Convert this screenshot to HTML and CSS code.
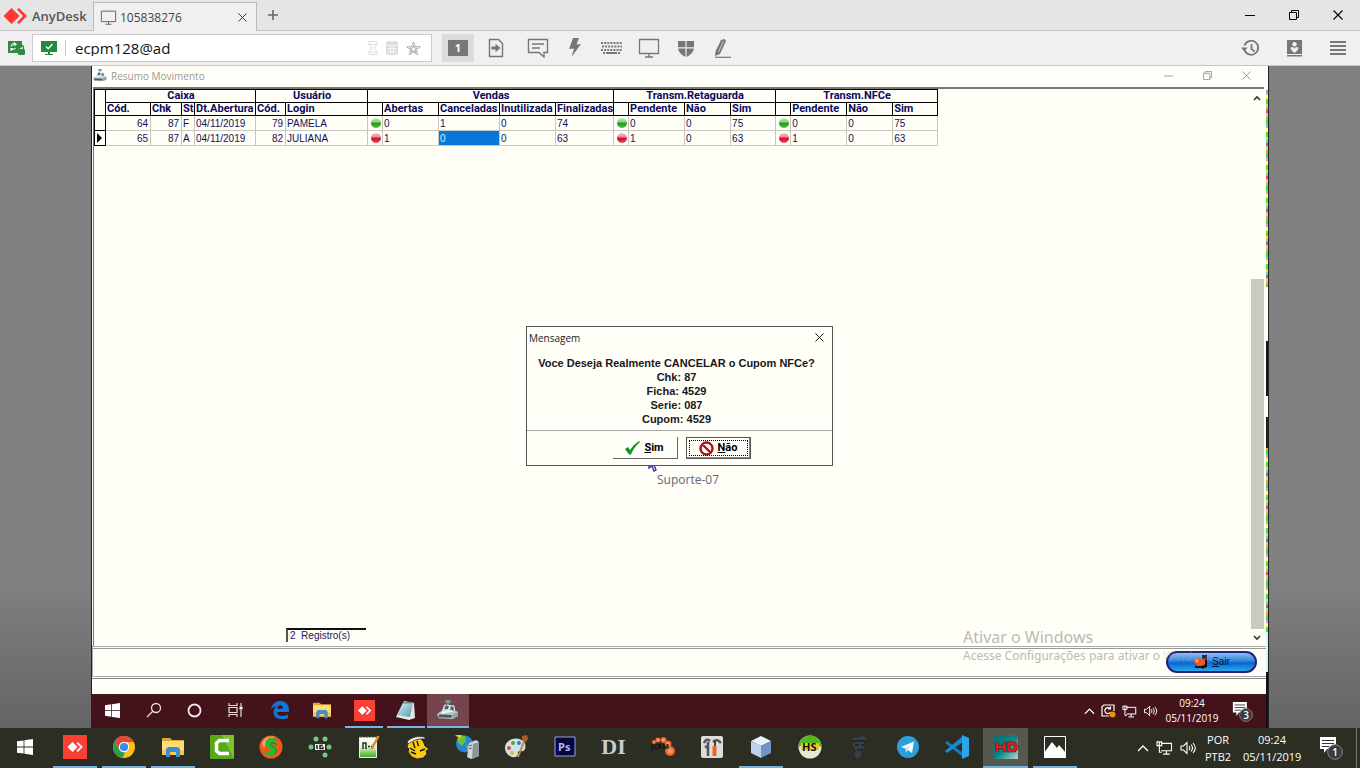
FILE: index.html
```html
<!DOCTYPE html>
<html lang="pt-BR">
<head>
<meta charset="utf-8">
<title>AnyDesk - 105838276</title>
<link rel="stylesheet" href="styles.css">
</head>
<body>
<svg class="defs" width="0" height="0" aria-hidden="true">
  <defs>
    <linearGradient id="gGreen" x1="0" y1="0" x2="0" y2="1"><stop offset="0" stop-color="#cfeec4"/><stop offset=".4" stop-color="#7fd070"/><stop offset=".55" stop-color="#259a22"/><stop offset="1" stop-color="#4cc03c"/></linearGradient>
    <linearGradient id="gRed" x1="0" y1="0" x2="0" y2="1"><stop offset="0" stop-color="#fbc8cf"/><stop offset=".4" stop-color="#ee7f8e"/><stop offset=".55" stop-color="#cc1030"/><stop offset="1" stop-color="#f04058"/></linearGradient>
    <linearGradient id="gTeal" x1="0" y1="0" x2="1" y2="1"><stop offset="0" stop-color="#06706c"/><stop offset=".5" stop-color="#0a8580"/><stop offset="1" stop-color="#b9d4d0"/></linearGradient>
    <linearGradient id="gNote" x1="0" y1="0" x2="0" y2="1"><stop offset="0" stop-color="#fff"/><stop offset=".45" stop-color="#e8f6d8"/><stop offset="1" stop-color="#38a818"/></linearGradient>
    <linearGradient id="gPad" x1="0" y1="0" x2="1" y2="1"><stop offset="0" stop-color="#d8f4f4"/><stop offset="1" stop-color="#4a9cae"/></linearGradient>
    <radialGradient id="gOrange"><stop offset="0" stop-color="#ffb080"/><stop offset="1" stop-color="#e8501c"/></radialGradient>
    <symbol id="windows" viewBox="0 0 16 16"><path fill="#fff" d="M0 2.3 6.6 1.4v6.2H0zM7.4 1.3 16 0v7.6H7.400zM0 8.400h6.600v6.200L0 13.700zM7.400 8.400H16V16l-8.600-1.200z"/></symbol>
    <symbol id="anydesk" viewBox="0 0 24 24"><path fill="#fa4035" d="M0 0h24v24H0z"/><path fill="#fff" d="m9.500 7 5 5-5 5-5-5zM13.500 8.300 14.800 7l5 5-5 5-1.300-1.300 3.700-3.700z"/></symbol>
    <symbol id="folder" viewBox="0 0 24 22"><path fill="#e0a52c" d="M1 2h8l2 2h12v4H1z"/><path fill="#ffdc78" d="M1 5h22v14H1z"/><path fill="#f4c550" d="M1 14h22v5H1z"/><path fill="#3a8fd0" d="M5 21v-8l2-2h10l2 2v8h-4v-5H9v5z"/></symbol>
    <symbol id="monitor" viewBox="0 0 22 20"><path fill="none" stroke="currentColor" stroke-width="1.300" d="M1.500 1.500h19v14h-19zM11 15.500V19M7 19h8"/></symbol>
    <symbol id="network" viewBox="0 0 18 15"><path fill="none" stroke="#fff" stroke-width="1.200" d="M5.500 2.500h11v8H5.500M11 10.500V14M7.500 14h7M1 1h5v4H1zM3.500 5v7H6M3.500 1v4"/></symbol>
    <symbol id="volume" viewBox="0 0 16 14"><path fill="none" stroke="#fff" stroke-width="1.100" d="M1 5h2.500L7 1.500v11L3.500 9H1zM9 5q1.500 2 0 4M11 3.500q3 3.500 0 7M13 2q4.500 5 0 10"/></symbol>
    <symbol id="chevron" viewBox="0 0 12 8"><path fill="none" stroke="currentColor" stroke-width="1.300" d="m1 7 5-5 5 5"/></symbol>
    <symbol id="arrow" viewBox="0 0 8 6"><path fill="none" stroke="currentColor" stroke-width="1.600" d="m1 5 3-3 3 3"/></symbol>
    <symbol id="cross" viewBox="0 0 10 10"><path fill="none" stroke="currentColor" stroke-width="1.100" d="m.5.5 9 9m0-9-9 9"/></symbol>
    <symbol id="restore" viewBox="0 0 10 10"><path fill="none" stroke="currentColor" d="M.5 2.500h7v7h-7zM2.500 2.500v-2h7v7h-2"/></symbol>
    <symbol id="dash" viewBox="0 0 10 10"><path stroke="currentColor" d="M0 5.500h10"/></symbol>
    <symbol id="notice" viewBox="0 0 24 24"><path fill="#fff" d="M1 1h16v12H8l-3 4v-4H1z"/><path stroke="#333" d="M3 4.500h12M3 7.500h12M3 10.500h7"/><circle cx="16" cy="16" r="7.300" fill="#3b3b3b" stroke="#888"/></symbol>
    <symbol id="register" viewBox="0 0 24 22"><path fill="#7f979a" d="M9 0h6v3h-2v3h-2V3H9z"/><path fill="#dce8e8" d="m8 5 11 1 1 6-16 3z"/><path fill="#42646a" d="m9 6 4 .5-1 3.500-4 .5zM15 7l3 .5.500 4-4 .5z"/><path fill="#b4c8ca" d="m3 13 14-2 6 2v5l-6 3-15-1-2-4z"/><path fill="#f3f8f8" d="m4 13 12-1.500 1 1.500-12 2z"/><path fill="#48585e" d="m2 16 14 .5v3L2 19z"/><path fill="#8ba2a6" d="m17 16 6-2.500V18l-6 3z"/></symbol>
    <symbol id="ballG" viewBox="0 0 10 10"><circle cx="5" cy="5" r="5" fill="url(#gGreen)"/></symbol>
    <symbol id="ballR" viewBox="0 0 10 10"><circle cx="5" cy="5" r="5" fill="url(#gRed)"/></symbol>
  </defs>
</svg>

<header class="tabs">
  <div class="brand">
    <svg width="24" height="18" viewBox="0 0 24 18"><path fill="#ff3b30" d="m8.500 1 8 8-8 8-8-8zM14 2.500 16 1l8 8-8 8-2-1.500L20 9z"/></svg>
    <span>AnyDesk</span>
  </div>
  <div class="tab">
    <svg class="tab-icon" width="17" height="15"><use href="#monitor"/></svg>
    <span class="tab-name">105838276</span>
    <button class="plain" aria-label="Fechar aba"><svg width="9" height="9"><use href="#cross"/></svg></button>
  </div>
  <button class="plain add" aria-label="Nova aba"><svg width="12" height="12" viewBox="0 0 12 12"><path stroke="#666" stroke-width="1.600" d="M6 1v10M1 6h10"/></svg></button>
  <div class="window-buttons">
    <button class="plain" aria-label="Minimizar"><svg width="10" height="10"><use href="#dash"/></svg></button>
    <button class="plain" aria-label="Restaurar"><svg width="10" height="10"><use href="#restore"/></svg></button>
    <button class="plain" aria-label="Fechar"><svg width="10" height="10"><use href="#cross"/></svg></button>
  </div>
</header>

<nav class="toolbar">
  <svg class="secure" width="17" height="16" viewBox="0 0 17 16"><path fill="#2e8b3d" d="M0 1h14v6.500a3.500 3.500 0 0 0-4 3.500v2H0z"/><path fill="none" stroke="#fff" stroke-width="1.200" d="M3 6.500a3 3 0 0 1 5-2M6 2.500l2 2-2.500 1M7.500 8a3 3 0 0 1-4.500.5M3 11V8.500h2"/><rect x="10" y="9" width="7" height="6" rx="1.500" fill="#2e8b3d"/><path fill="none" stroke="#2e8b3d" stroke-width="1.400" d="M11.500 9V7.500a2 2 0 0 1 4 0V9"/></svg>
  <div class="address">
    <svg width="16" height="14" viewBox="0 0 16 14"><path fill="#238b3b" d="M0 0h16v11H9v2h3v1H4v-1h3v-2H0z"/><path fill="none" stroke="#fff" stroke-width="1.300" d="m5 5.500 2.200 2.200L11.500 3"/></svg>
    <input type="text" value="ecpm128@ad" aria-label="Endereço remoto">
    <svg width="10" height="14" viewBox="0 0 10 14" fill="none" stroke="#ddd"><path d="M1 .5h8v3L6 7l3 3.500v3H1v-3L4 7 1 3.500zM1 3.500h8M1 11h8"/></svg>
    <svg width="12" height="14" viewBox="0 0 12 14"><rect width="12" height="14" rx="2" fill="#ddd"/><path stroke="#f4f4f4" d="M1 4.500h10M1 7.500h10M1 10.500h10M4.500 4v9M7.500 4v9"/></svg>
    <svg width="15" height="15" viewBox="0 0 15 15"><path fill="none" stroke="#aaa" d="m7.500 1 1.800 4.600 5 .3-3.900 3.100 1.400 4.900-4.300-2.800-4.300 2.800L4.600 9 .7 5.900l5-.3zM7.500 4.500l1 2.500 2.500.2-2 1.500.6 2.500-2.100-1.500-2.100 1.500.6-2.500-2-1.500 2.500-.2z"/></svg>
  </div>
  <div class="tools">
    <button class="plain screen-no" aria-label="Tela 1"><span>1</span></button>
    <button class="plain" aria-label="Transferir arquivos"><svg width="16" height="20" viewBox="0 0 16 20"><path fill="none" stroke="#777" stroke-width="1.400" d="M1.500 1.500h9l4 4v13h-13z"/><path fill="#777" d="M3.500 8.500h4V5.800l5 4.200-5 4.200v-2.700h-4z"/></svg></button>
    <button class="plain chat" aria-label="Chat"><svg width="22" height="20" viewBox="0 0 22 20"><path fill="none" stroke="#777" stroke-width="1.400" d="M1.500 1.500h19v13H17V19l-5-4.500H1.500zM5 6h12M5 10h8"/></svg></button>
    <button class="plain" aria-label="Ações"><svg width="14" height="20" viewBox="0 0 14 20"><path fill="#777" d="M5 0h6L8.500 6.500 13 6 3.500 19 6 10.500 1 11z"/></svg></button>
    <button class="plain" aria-label="Teclado"><svg width="21" height="12" viewBox="0 0 21 12"><path fill="none" stroke="#777" stroke-width="2" stroke-dasharray="2 1.100" d="M0 1h21M1 4.500h20M0 8h21"/><path stroke="#777" stroke-width="2" d="M2 11h2M5 11h11M17 11h2"/></svg></button>
    <button class="plain" aria-label="Exibição"><svg width="22" height="20" color="#777"><use href="#monitor"/></svg></button>
    <button class="plain" aria-label="Permissões"><svg width="16" height="17" viewBox="0 0 16 17"><path fill="#777" d="M0 1h7.400v6.300H0zM8.600 1H16v6.300H8.600zM0 8.500h7.400V17Q1 14 0 8.500zM8.600 8.500H16Q15 14 8.600 17z"/></svg></button>
    <button class="plain" aria-label="Desenhar"><svg width="17" height="19" viewBox="0 0 17 19"><path fill="#777" d="m7 1 3.500-1 1.500 2-6 13L1 17l.5-4.500z"/><path stroke="#f0f0f0" stroke-width=".7" d="M9.500 2 4.500 13"/><path stroke="#777" stroke-width="1.200" d="M1 18.300h16"/></svg></button>
  </div>
  <div class="session">
    <button class="plain" aria-label="Histórico"><svg width="19" height="17" viewBox="0 0 19 17"><path fill="none" stroke="#777" stroke-width="1.800" d="M3.500 10a7 7 0 1 0 0-4.500M10.500 4v5l3 2.500"/><path fill="#777" d="M0 7.500h6.500L3.200 11.500z"/></svg></button>
    <button class="plain" aria-label="Gravações"><svg width="15" height="17" viewBox="0 0 15 17"><path fill="#777" d="M0 0h15v14H0zM0 15h15v1.500H0z"/><circle cx="7.500" cy="4.300" r="2.200" fill="#f0f0f0"/><path fill="#f0f0f0" d="M3.500 8q2-2 4 .5 2-2.500 4-.5-.5 2.500-4 5-3.500-2.500-4-5z"/></svg></button>
    <button class="plain" aria-label="Menu"><svg width="16" height="14" viewBox="0 0 16 14"><path stroke="#777" stroke-width="1.800" d="M0 1h16M0 5h16M0 9h16M0 13h16"/></svg></button>
  </div>
</nav>

<main class="stage">
  <div class="remote">
    <section class="app">
      <div class="app-title">
        <svg width="14" height="13"><use href="#register"/></svg>
        <h1>Resumo Movimento</h1>
        <div class="app-buttons">
          <button class="plain" aria-label="Minimizar janela"><svg width="9" height="9"><use href="#dash"/></svg></button>
          <button class="plain" aria-label="Restaurar janela"><svg width="9" height="9"><use href="#restore"/></svg></button>
          <button class="plain" aria-label="Fechar janela"><svg width="9" height="9"><use href="#cross"/></svg></button>
        </div>
      </div>

      <div class="grid-area">
        <div class="grid-main">
          <table class="grid">
            <colgroup>
              <col class="c11"><col class="c45"><col class="c31"><col class="c13"><col class="c61"><col class="c30"><col class="c82">
              <col class="c15"><col class="c56"><col class="c61"><col class="c56"><col class="c58">
              <col class="c15"><col class="c56"><col class="c46"><col class="c45">
              <col class="c15"><col class="c56"><col class="c46"><col class="c45">
            </colgroup>
            <thead>
              <tr class="groups"><th rowspan="2"></th><th colspan="4">Caixa</th><th colspan="2">Usuário</th><th colspan="5">Vendas</th><th colspan="4">Transm.Retaguarda</th><th colspan="4">Transm.NFCe</th></tr>
              <tr class="names"><th>Cód.</th><th>Chk</th><th>St</th><th>Dt.Abertura</th><th>Cód.</th><th>Login</th><th></th><th>Abertas</th><th>Canceladas</th><th>Inutilizada</th><th>Finalizadas</th><th></th><th>Pendente</th><th>Não</th><th>Sim</th><th></th><th>Pendente</th><th>Não</th><th>Sim</th></tr>
            </thead>
            <tbody>
              <tr><td class="mark"></td><td class="num">64</td><td class="num">87</td><td>F</td><td>04/11/2019</td><td class="num">79</td><td>PAMELA</td><td class="ball"><svg width="10" height="10"><use href="#ballG"/></svg></td><td>0</td><td>1</td><td>0</td><td>74</td><td class="ball"><svg width="10" height="10"><use href="#ballG"/></svg></td><td>0</td><td>0</td><td>75</td><td class="ball"><svg width="10" height="10"><use href="#ballG"/></svg></td><td>0</td><td>0</td><td>75</td></tr>
              <tr><td class="mark"><svg width="6" height="10" viewBox="0 0 6 10"><path d="m0 0 5 5-5 5z"/></svg></td><td class="num">65</td><td class="num">87</td><td>A</td><td>04/11/2019</td><td class="num">82</td><td>JULIANA</td><td class="ball"><svg width="10" height="10"><use href="#ballR"/></svg></td><td>1</td><td class="selected">0</td><td>0</td><td>63</td><td class="ball"><svg width="10" height="10"><use href="#ballR"/></svg></td><td>1</td><td>0</td><td>63</td><td class="ball"><svg width="10" height="10"><use href="#ballR"/></svg></td><td>1</td><td>0</td><td>63</td></tr>
            </tbody>
          </table>
          <div class="count">2&nbsp; Registro(s)</div>
        </div>
        <div class="scroll">
          <button class="plain" aria-label="Rolar para cima"><svg width="8" height="6"><use href="#arrow"/></svg></button>
          <div class="thumb"></div>
          <button class="plain down" aria-label="Rolar para baixo"><svg width="8" height="6"><use href="#arrow"/></svg></button>
        </div>
      </div>

      <div class="actions">
        <button class="exit"><svg width="15" height="14" viewBox="0 0 15 14"><path fill="#101018" d="M9 0h5v12l-5 2zM2 11h8v2H2z"/><path fill="#f0552c" d="M0 6 6 2v2.500h4l1-2 1 2v5l-2 1H6V12z"/><path fill="#ffb070" d="m2 6 3-2v4z"/></svg><span><u>S</u>air</span></button>
      </div>
      <div class="status"></div>

      <div class="watermark"><p class="wm-title">Ativar o Windows</p><p>Acesse Configurações para ativar o <span>Windows.</span></p></div>
      <div class="pointer">
        <svg width="12" height="12" viewBox="0 0 12 12"><path fill="#fff" stroke="#35309c" stroke-width="1.400" d="M1 0v7l3-2 2 5 2-1-2-5h4"/></svg>
        <span>Suporte-07</span>
      </div>

      <div class="dialog" role="dialog" aria-labelledby="dlg">
        <div class="dialog-title"><h2 id="dlg">Mensagem</h2><button class="plain" aria-label="Fechar mensagem"><svg width="9" height="9"><use href="#cross"/></svg></button></div>
        <p class="message">Voce Deseja Realmente CANCELAR o Cupom NFCe?<br>Chk: 87<br>Ficha: 4529<br>Serie: 087<br>Cupom: 4529</p>
        <div class="choices">
          <button class="choice"><svg width="15" height="14" viewBox="0 0 15 14"><path fill="#13942a" d="m0 8 3-2 2 3Q9 3 14 0l1 1Q9 6 6 13.500H4Z"/></svg><span><u>S</u>im</span></button>
          <button class="choice focused"><svg width="15" height="15" viewBox="0 0 15 15"><path fill="none" stroke="#b01018" stroke-width="2.400" d="M7.500 1.500a6 6 0 1 0 0 12 6 6 0 0 0 0-12zM3.500 3.500l8 8"/></svg><span><u>N</u>ão</span></button>
        </div>
      </div>
    </section>

    <div class="remote-bar">
      <button class="plain item" aria-label="Iniciar"><svg width="15" height="15"><use href="#windows"/></svg></button>
      <button class="plain item" aria-label="Pesquisar"><svg width="16" height="16" viewBox="0 0 16 16"><path fill="none" stroke="#e8dcdc" stroke-width="1.300" d="M10 1.500a4.500 4.500 0 1 0 0 9 4.500 4.500 0 0 0 0-9zM6.500 9.500 1 15"/></svg></button>
      <button class="plain item" aria-label="Cortana"><svg width="15" height="15" viewBox="0 0 15 15"><circle cx="7.500" cy="7.500" r="6" fill="none" stroke="#f0e8e8" stroke-width="1.800"/></svg></button>
      <button class="plain item" aria-label="Visão de tarefas"><svg width="15" height="14" viewBox="0 0 15 14"><path fill="none" stroke="#e8dcdc" stroke-width="1.200" d="M1 0v2.500h8V0M1 14v-2.500h8V14M1 4.500h8v5H1zM13 0v3M13 7v7"/><path fill="#fff" d="M11.500 3.500h3v3h-3z"/></svg></button>
      <button class="plain item first-app" aria-label="Edge"><svg width="18" height="18" viewBox="0 0 18 18"><path fill="#0c78dc" d="M0 8.500C1 3 4.500 0 9.300 0 14.500 0 18 3.500 18 9v2H6c.2 3 2.500 4 5 4 2 0 4-.5 6-1.500V17c-2 1-4 1-6 1-5 0-8.500-2.500-8.500-7C2.500 8 4 6 6.500 4.800 3.500 5 1.500 6.500 0 8.500zM6.200 7.800h5.800C12 5.500 11 4.300 9.200 4.300 7.500 4.300 6.500 5.500 6.200 7.800z"/></svg></button>
      <button class="plain item" aria-label="Explorador"><svg width="20" height="18"><use href="#folder"/></svg></button>
      <button class="plain item running" aria-label="AnyDesk"><svg width="21" height="21"><use href="#anydesk"/></svg></button>
      <button class="plain item running" aria-label="Bloco de notas"><svg width="20" height="19" viewBox="0 0 20 19"><path fill="#e6e6e6" d="m8 0 10 2 1 15-6 2-13-3z"/><path fill="url(#gPad)" d="M7 2h10l-3 14-13-2z"/><path fill="#7a8890" d="M7 1h10v1.500H7z"/></svg></button>
      <button class="plain item running active" aria-label="Resumo"><svg width="22" height="20"><use href="#register"/></svg></button>
      <div class="remote-tray">
        <svg width="11" height="8" color="#fff"><use href="#chevron"/></svg>
        <svg width="15" height="14" viewBox="0 0 15 14"><path fill="none" stroke="#fff" stroke-width="1.200" d="M13 7V1H3L1 2.500V12h7"/><path fill="none" stroke="#fff" stroke-width="1.200" d="M9 4.500A3 3 0 1 0 9.500 8M9.500 2.500v2.500H7"/><circle cx="11.500" cy="10.500" r="3" fill="#f09010"/></svg>
        <svg width="15" height="13"><use href="#network"/></svg>
        <svg width="15" height="12"><use href="#volume"/></svg>
        <div class="clock">09:24<br>05/11/2019</div>
        <div class="notice"><svg width="21" height="21"><use href="#notice"/></svg><span>3</span></div>
      </div>
    </div>
  </div>
  <div class="noise"></div>
</main>

<footer class="taskbar">
  <button class="plain task start" aria-label="Iniciar"><svg width="16" height="16"><use href="#windows"/></svg></button>
  <button class="plain task on" aria-label="AnyDesk"><svg width="24" height="24"><use href="#anydesk"/></svg></button>
  <button class="plain task on" aria-label="Chrome"><svg width="24" height="24" viewBox="0 0 24 24"><circle cx="12" cy="12" r="11" fill="#fbc116"/><path fill="#df4738" d="M2.500 6.500A11 11 0 0 1 21.700 7H12a5 5 0 0 0-4.500 7z"/><path fill="#26a050" d="M2.500 6.500 7.700 14.700A5 5 0 0 0 13 17l-2.500 5.900A11 11 0 0 1 2.500 6.500z"/><circle cx="12" cy="12" r="5.200" fill="#fff"/><circle cx="12" cy="12" r="4.100" fill="#4285f4"/></svg></button>
  <button class="plain task on" aria-label="Explorador"><svg width="24" height="22"><use href="#folder"/></svg></button>
  <button class="plain task" aria-label="Camtasia"><svg width="24" height="24" viewBox="0 0 24 24"><rect width="24" height="24" rx="1" fill="#5aa818"/><path fill="#79c32c" d="M12 0h12v24z"/><path fill="none" stroke="#fff" stroke-width="3.500" d="M19 5.500H9.500L6.500 8v8l3 2.500H19"/></svg></button>
  <button class="plain task" aria-label="S"><svg width="24" height="24" viewBox="0 0 24 24"><circle cx="12" cy="12" r="11.500" fill="#f0581c"/><path fill="#ffa070" d="M3 8q4-8 13-6Q7 4 5 14z"/><path fill="none" stroke="#25b830" stroke-width="5" d="M16.500 7q-5-3.500-7.500 0-1 3 3 4.500t3 5q-3 3.500-7.500 1"/><path fill="none" stroke="#11701c" stroke-width=".8" d="M18 9.500q-5-3-6.500 0 0 1.500 3.500 3 4 3 1 6"/></svg></button>
  <button class="plain task" aria-label="IG"><svg width="24" height="24" viewBox="0 0 24 24"><g fill="#72c888"><circle cx="8" cy="4" r="2.500"/><circle cx="17" cy="4" r="2.500"/><circle cx="3" cy="12" r="2.500"/><circle cx="21" cy="12" r="2.500"/><circle cx="17" cy="20" r="2.500"/></g><path fill="#eee" d="M7 9h10v6H7z"/><path fill="none" stroke="#222" stroke-width="1.500" d="M9 10v4M15 10.500h-3v3h3V12"/></svg></button>
  <button class="plain task" aria-label="Notepad++"><svg width="22" height="24" viewBox="0 0 22 24"><path fill="url(#gNote)" stroke="#eee" d="M1.500 2.500h17v20h-17z"/><path stroke="#555" stroke-dasharray="2 1" d="M2 2h17"/><path fill="none" stroke="#222" stroke-width="1.400" d="M5 14V8h3v6M10 11.500h2M13 11.500h2"/><path fill="none" stroke="#d89020" stroke-width="2.500" d="m20.500 1-7 13"/></svg></button>
  <button class="plain task" aria-label="Ferramenta"><svg width="24" height="24" viewBox="0 0 24 24"><path fill="#f7c815" stroke="#17170e" stroke-width=".8" d="m2 8 5-4 8-1 3 5 1 3 4 3-3 2 1 3-4 4-6 1-5-2-4-5 1-3-2-2z"/><path stroke="#17170e" stroke-width="1.400" fill="none" d="m7 7 2 6M11 6l1.500 5M4 13l5 3M5 17l5 2M14 16l5-2"/><path fill="#fff" stroke="#111" stroke-width=".7" d="M1 7Q7 0 19 2v2Q9 3 2 9z"/></svg></button>
  <button class="plain task" aria-label="Rede"><svg width="24" height="24" viewBox="0 0 24 24"><circle cx="9.500" cy="9" r="8.500" fill="#2686d4"/><path fill="#6cc040" d="M2 4q4-5 8-3l1 5-4 5-4-3zM11 11l5-3 2 4-5 5z"/><path fill="#f5c81c" d="M0 0h7L5 4z"/><path fill="#ced4d8" d="m14 8 7-3 3 2v14l-8 3-4-2z"/><path fill="#8b969c" d="m18 9 6-2v14l-7 3z"/><path stroke="#667" d="m14 11 3-1M14 14l3-1"/></svg></button>
  <button class="plain task" aria-label="Paint"><svg width="24" height="24" viewBox="0 0 24 24"><path fill="#cfe2e8" d="M1 14C0 7 8 2 15 4q8 2 6 10-1 3-5 2-3 0-2 3-1 4-6 3-6-2-7-8z"/><g><circle cx="5" cy="13" r="2" fill="#dd4a32"/><circle cx="9" cy="8" r="2" fill="#48a848"/><circle cx="15" cy="8" r="2" fill="#3877ce"/><circle cx="8" cy="18" r="2" fill="#edb728"/></g><path stroke="#c98242" stroke-width="2" d="m21 4-7 18"/><path fill="#a85e26" d="m18 1 5-1 1 4-3 4-3-3z"/></svg></button>
  <button class="plain task" aria-label="Photoshop"><svg width="22" height="22" viewBox="0 0 22 22"><path fill="#07073c" stroke="#8fa5ec" d="M1 1h20v19H1z"/><text class="ps" x="4" y="15">Ps</text></svg></button>
  <button class="plain task"><span class="di">DI</span></button>
  <button class="plain task" aria-label="jCRM"><svg width="24" height="22" viewBox="0 0 24 22"><g fill="url(#gOrange)"><circle cx="3" cy="6" r="2"/><circle cx="7" cy="4" r="2.600"/><circle cx="12.500" cy="4" r="3"/><circle cx="17" cy="8" r="3.500"/><circle cx="19" cy="15" r="5"/></g><text class="jc" x="0" y="13">jCRM</text></svg></button>
  <button class="plain task" aria-label="Utilitários"><svg width="22" height="22" viewBox="0 0 22 22"><rect width="22" height="22" rx="2" fill="#ddd"/><path fill="none" stroke="#555" stroke-width="2.500" d="M3 7q2-5 6-2M7 6v14M12 6q4-4 8 1M4 10l4 3"/><path stroke="#ec6624" stroke-width="4" d="M13.500 10v10"/><path stroke="#444" stroke-width="2" d="M14 5v5"/></svg></button>
  <button class="plain task on" aria-label="VirtualBox"><svg width="22" height="24" viewBox="0 0 22 24"><path fill="#eaf2fb" d="M11 1 21 6 11 11 1 6z"/><path fill="#bed1ea" d="m1 6 10 5v12L1 18z"/><path fill="#7193c5" d="m21 6-10 5v12l10-5z"/></svg></button>
  <button class="plain task" aria-label="HeidiSQL"><svg width="24" height="24" viewBox="0 0 24 24"><circle cx="12" cy="12" r="11.500" fill="#e8e6d4"/><path fill="#53b81d" d="M.5 12a11.500 11.500 0 0 1 23 0q-3-2-11.500-2T.5 12z"/><path fill="#f2c81c" d="M3 8h18v7H3z"/><text class="hs" x="4" y="16">HS</text></svg></button>
  <button class="plain task" aria-label="Banco de dados"><svg width="20" height="24" viewBox="0 0 20 24"><path fill="#364048" d="m4 3 11-2 3 4-3 1v6l-3 4v6l-4 1-3-2 2-5-3-5z"/><path fill="none" stroke="#16212a" stroke-width="1.500" d="M4 6h12M6 10h4M12 10h3M8 15h5"/></svg></button>
  <button class="plain task" aria-label="Telegram"><svg width="22" height="22" viewBox="0 0 22 22"><circle cx="11" cy="11" r="11" fill="#2c9fda"/><path fill="#fff" d="m4 11 13-5.500L15 17l-4-3-2 2-.5-3.500z"/><path fill="#b8dbee" d="m8.500 12.500 6-5-4 5.500L9 16z"/></svg></button>
  <button class="plain task" aria-label="VS Code"><svg width="24" height="24" viewBox="0 0 24 24"><path fill="#167dbe" d="m0 8 2-2 16 12v4L0 8z"/><path fill="#1b8bd0" d="m0 16 2 2L18 7V1L0 16z"/><path fill="#2ba4ea" d="m17 0 7 3v18l-7 3z"/></svg></button>
  <button class="plain task on current" aria-label="HD"><svg width="24" height="24" viewBox="0 0 24 24"><path fill="url(#gTeal)" d="M0 0h24v24H0z"/><path fill="none" stroke="#222" stroke-width="3.500" d="M3 7.500v9M3 12h7M10.500 7.500v9M14.500 8.500h6q1.500 1 1.500 3.500t-1.500 3.500h-6z"/><path fill="none" stroke="#ec1825" stroke-width="2.400" d="M3 7.500v9M3 12h7M10.500 7.500v9M14.500 8.500h6q1.500 1 1.500 3.500t-1.500 3.500h-6z"/></svg></button>
  <button class="plain task on" aria-label="Fotos"><svg width="22" height="22" viewBox="0 0 22 22"><path fill="none" stroke="#fff" d="M.5.5h21v21H.5z"/><path fill="#fff" d="M0 17 8 6l5 6 2-3 7 8v5H0z"/></svg></button>
  <div class="tray">
    <svg width="12" height="8" color="#fff"><use href="#chevron"/></svg>
    <svg width="17" height="14"><use href="#network"/></svg>
    <svg width="16" height="14"><use href="#volume"/></svg>
    <div class="lang">POR<br>PTB2</div>
    <div class="clock">09:24<br>05/11/2019</div>
    <div class="notice"><svg width="24" height="24"><use href="#notice"/></svg><span>1</span></div>
  </div>
</footer>
</body>
</html>
```

FILE: styles.css
```css
* { box-sizing: border-box; }
body { margin: 0; height: 100vh; display: flex; flex-direction: column; overflow: hidden; font-family: "Open Sans", "Noto Sans", sans-serif; font-size: 12px; color: #333; }
.defs { position: absolute; }
svg { display: block; flex: none; }
h1, h2, p { margin: 0; font-weight: 400; }
.plain { display: flex; align-items: center; justify-content: center; padding: 0; border: 0; background: none; color: inherit; font: inherit; }

.tabs { display: flex; flex: none; height: 31px; background: #e5e5e5; border-bottom: 1px solid #c4c4c4; }
.brand { display: flex; align-items: center; gap: 5px; width: 93px; padding: 2px 0 0 3px; color: #555; font-size: 13px; font-weight: 600; }
.tab { display: flex; align-items: center; width: 164px; height: 29px; margin-top: 2px; padding: 0 9px 0 6px; background: #f0f0f0; border: 1px solid #bbb; border-bottom: 0; }
.tab-icon { color: #666; }
.tab-name { flex: 1; padding-left: 3px; color: #444; }
.add { width: 32px; }
.window-buttons { display: flex; margin-left: auto; color: #000; }
.window-buttons button { width: 44px; }

.toolbar { display: flex; flex: none; align-items: center; height: 35px; background: #f0f0f0; border-bottom: 1px solid #c8c8c8; }
.secure { margin: 0 7px 0 8px; }
.address { display: flex; align-items: center; gap: 8px; width: 400px; height: 28px; padding: 0 10px 0 8px; background: #fff; border: 1px solid #ccc; }
.address input { flex: 1; min-width: 0; height: 16px; padding: 0 0 0 9px; border: 0; border-left: 1px solid #ccc; outline: 0; background: none; color: #111; font: 15px/16px "Open Sans", sans-serif; }
.tools { display: flex; align-items: center; padding-left: 10px; }
.tools button { width: 37px; height: 28px; }
.tools .screen-no { width: 32px; margin-right: 3px; background: #dcdcdc; }
.tools .chat { margin-left: 5px; }
.screen-no span { width: 20px; height: 16px; background: #777; color: #fff; font: bold 11px/16px "Open Sans", sans-serif; }
.session { display: flex; margin-left: auto; }
.session button { width: 44px; }

.stage { display: flex; flex: 1; min-height: 0; padding: 0 91px; background: linear-gradient(#808080 78%, #646464); }
.remote { display: flex; flex: 1; flex-direction: column; min-width: 0; border-left: 1px solid #222; }
.noise { flex: none; width: 3px; border-right: 1px solid #222; background:
  linear-gradient(#fffff8 0 24px, transparent 24px 221px, #fffff8 221px 275px, #181818 275px 330px, #fffff8 330px 351px, #202018 351px 382px, transparent 382px 566px, #c8fff0 566px 606px, #101010 606px),
  repeating-linear-gradient(#40e840 0 5px, #e8e040 5px 8px, #50d8d0 8px 11px, #e85050 11px 14px, #b0d8a0 14px 18px, #f0a040 18px 21px, #38e838 21px 26px, #c0a8e0 26px 29px, #ffff70 29px 33px); }

.app { position: relative; display: flex; flex: 1; flex-direction: column; min-height: 0; background: #fffff8; }
.app-title { display: flex; flex: none; align-items: center; gap: 4px; height: 21px; padding: 0 0 2px 1px; color: #999; }
.app-title h1 { font-size: 10px; }
.app-buttons { display: flex; margin-left: auto; }
.app-buttons button { width: 39px; }
.grid-area { display: flex; flex: 1; min-height: 0; margin: 0 2px 0 1px; border-top: 2px solid #777; border-left: 1px solid #777; }
.grid-main { display: flex; flex: 1; flex-direction: column; justify-content: space-between; align-items: flex-start; padding-bottom: 4px; }
.grid { table-layout: fixed; width: 844px; border-collapse: collapse; color: #101058; font: 10px/13px "Liberation Sans", Arial, sans-serif; }
.grid th, .grid td { height: 15px; padding: 0 0 0 1px; overflow: hidden; white-space: nowrap; text-align: left; border: 1px solid #c8c8c0; }
.grid th { height: 13px; border-color: #000; color: #0b0b60; font: bold 11px/12px Roboto, sans-serif; }
.grid .groups th { text-align: center; }
.grid .num { padding: 0 2px 0 0; text-align: right; }
.grid .mark { padding: 0 0 0 2px; border-color: #000; }
.grid .ball { padding: 0 0 0 3px; }
.grid .selected { background: #0878d8; color: #d8ecff; }
.c11 { width: 11px; } .c13 { width: 13px; } .c15 { width: 15px; } .c30 { width: 30px; } .c31 { width: 31px; }
.c45 { width: 45px; } .c46 { width: 46px; } .c56 { width: 56px; } .c58 { width: 58px; } .c61 { width: 61px; } .c82 { width: 82px; }
.count { width: 80px; height: 14px; margin-left: 192px; padding-left: 2px; border-top: 2px solid #111; border-left: 2px solid #555; color: #202058; font: 10px/12px "Liberation Sans", Arial, sans-serif; }
.scroll { display: flex; flex: none; flex-direction: column; width: 14px; color: #333; }
.scroll button { height: 17px; }
.down svg { transform: rotate(180deg); }
.thumb { flex: 1; margin: 173px 0 0 1px; background: #c9cbc3; }
.actions { display: flex; flex: none; align-items: center; justify-content: flex-end; height: 31px; padding-right: 9px; border: solid #aaa; border-width: 1px 0 1px 1px; box-shadow: inset 0 1px #fffff8, inset 0 2px #999; }
.status { flex: none; height: 17px; border-top: 1px solid #fffff8; box-shadow: inset 0 1px #888; }
.exit { display: flex; align-items: center; justify-content: center; gap: 4px; width: 91px; height: 22px; padding: 0; border: 2px solid #24207c; border-radius: 11px; background: linear-gradient(#8cc0f0, #2c82dc 45%, #0868cc 55%, #28a8f0); color: #041438; font: 10px/14px "Liberation Sans", Arial, sans-serif; }
.watermark { position: absolute; top: 561px; right: 36px; width: 267px; color: #b9bbb5; font: 12px/18px "Noto Sans", sans-serif; white-space: nowrap; }
.wm-title { font-size: 16px; line-height: 20px; }
.watermark span { opacity: .35; }
.pointer { position: absolute; top: 395px; left: 556px; color: #667; font-size: 12px; line-height: 14px; }
.pointer span { display: block; margin-left: 9px; }

.dialog { position: absolute; top: 260px; left: 434px; width: 307px; background: #fffff8; border: 1px solid #555; }
.dialog-title { display: flex; align-items: center; justify-content: space-between; height: 21px; padding: 0 8px 0 2px; color: #222; }
.dialog-title h2 { font-size: 10px; }
.message { padding: 8px 6px 4px 0; border-bottom: 1px solid #aaa; color: #181818; font: bold 11px/14px "Liberation Sans", Arial, sans-serif; text-align: center; white-space: nowrap; }
.choices { display: flex; justify-content: center; gap: 8px; padding: 6px 0 6px 4px; }
.choice { display: flex; align-items: center; justify-content: center; gap: 4px; width: 65px; height: 22px; padding: 0; background: #fffff8; border: solid #666; border-width: 0 1px 1px 0; color: #000; font: bold 11px/14px Roboto, sans-serif; }
.focused { border: 1px solid #555; box-shadow: inset -1px -1px #888; outline: 1px dotted #000; outline-offset: -4px; }

.remote-bar { display: flex; flex: none; height: 34px; background: #44121b; }
.item { width: 42px; border-bottom: 2px solid transparent; }
.item:nth-child(-n+4) { width: 41px; }
.first-app { margin-left: 3px; }
.running { border-image: linear-gradient(90deg, transparent 4px, #78b4e4 4px 38px, transparent 38px) 2; }
.active { border-image: none; border-bottom-color: #78b4e4; background: #75444c; }
.remote-tray { display: flex; align-items: center; margin-left: auto; gap: 6px; padding-right: 13px; color: #fff; }
.clock, .lang { text-align: center; white-space: nowrap; }
.remote-tray .clock { width: 56px; font-size: 10px; line-height: 15px; }
.notice { position: relative; color: #fff; }
.notice span { position: absolute; right: 1px; bottom: 1px; width: 14px; font-size: 10px; font-weight: 600; line-height: 14px; text-align: center; }
.remote-tray .notice { margin-left: 6px; }
.remote-tray .notice span { right: 0; bottom: 0; }

.taskbar { display: flex; flex: none; height: 40px; background: #2c2e23; color: #fff; }
.task { width: 49px; border-bottom: 2px solid transparent; }
.start { width: 50px; }
.on { border-image: linear-gradient(90deg, transparent 5px, #76b0e0 5px 45px, transparent 45px) 2; }
.current { width: 45px; margin: 0 2px; border-image: none; border-bottom-color: #76b0e0; background: #56584f; }
.ps { fill: #a9bdff; font: bold 11px "Open Sans", sans-serif; }
.jc { fill: #111; font: bold 7px "Open Sans", sans-serif; }
.hs { fill: #111; font: bold 11px "Open Sans", sans-serif; }
.di { color: #ccc; font: bold 22px/24px "Liberation Serif", serif; }
.tray { display: flex; align-items: center; gap: 7px; margin: 0 3px 0 auto; padding-right: 13px; border-right: 1px solid #777; }
.lang { width: 30px; margin-right: 3px; font-size: 11px; line-height: 17px; }
.tray .clock { width: 58px; font-size: 11px; line-height: 17px; }
.tray .notice { margin-left: 11px; }
```
